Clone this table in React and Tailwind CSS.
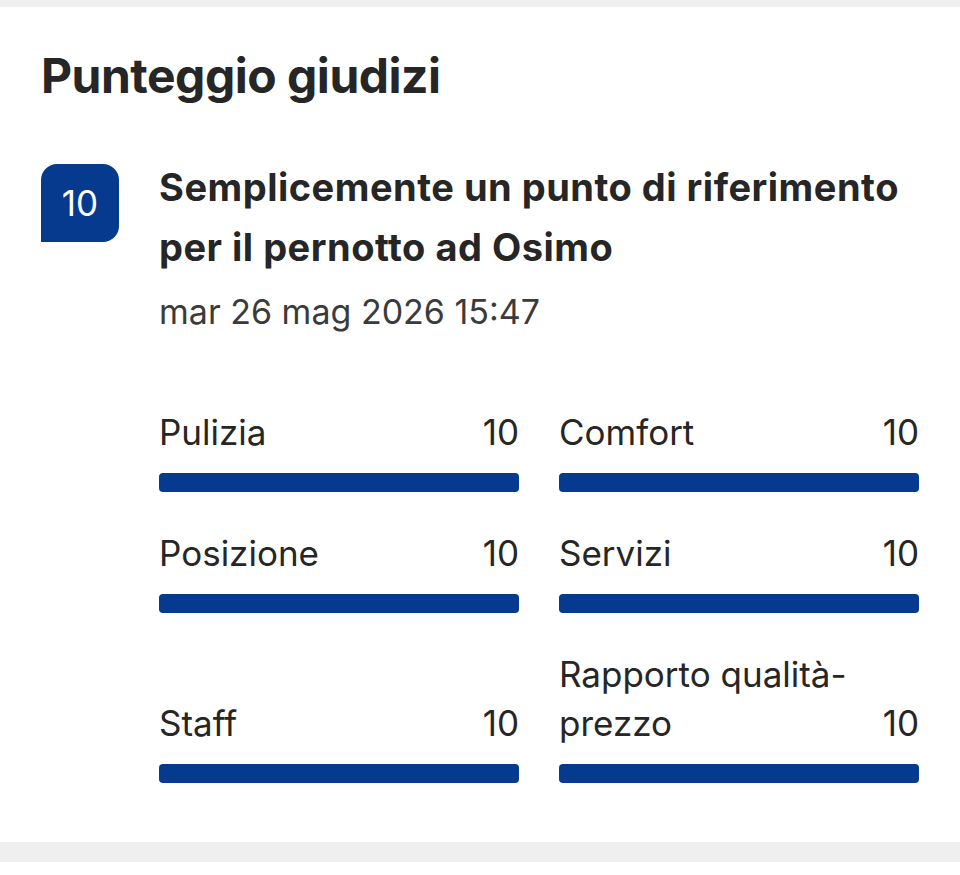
import React from "react";

const scores = [
  ["Pulizia", "10"],
  ["Comfort", "10"],
  ["Posizione", "10"],
  ["Servizi", "10"],
  ["Staff", "10"],
  ["Rapporto qualità-prezzo", "10"],
];

function Score({ label, value }) {
  return (
    <div className="flex flex-col justify-end">
      <div className="flex items-end justify-between gap-4 text-[35px] leading-[49px] text-[#262626]">
        <span className="max-w-[300px]">{label}</span>
        <span>{value}</span>
      </div>
      <div className="mt-[16px] h-[19px] w-full rounded-[4px] bg-[#063a8e]" />
    </div>
  );
}

export default function App() {
  return (
    <div
      className="flex h-[875px] w-[960px] flex-col bg-white"
      style={{ fontFamily: "Inter, 'Noto Sans', sans-serif" }}
    >
      <div className="h-[7px] bg-[#efefef]" />
      <div className="px-[41px] pt-[40px]">
        <h1 className="text-[48px] font-bold leading-[58px] tracking-[-0.5px] text-[#262626]">
          Punteggio giudizi
        </h1>
        <div className="mt-[52px] flex items-start gap-[40px]">
          <div className="mt-[7px] flex h-[78px] w-[78px] shrink-0 items-center justify-center rounded-t-[16px] rounded-br-[16px] bg-[#063a8e] text-[35px] text-white">
            10
          </div>
          <div className="flex-1">
            <div className="text-[38px] font-bold leading-[60px] tracking-[0.5px] text-[#262626]">
              Semplicemente un punto di riferimento per il pernotto ad Osimo
            </div>
            <div className="mt-[10px] text-[34px] leading-[50px] text-[#3b3b3b]">
              mar 26 mag 2026 15:47
            </div>
            <div className="mt-[71px] grid grid-cols-2 gap-x-[40px] gap-y-[37px]">
              {scores.map(([l, v]) => (
                <Score key={l} label={l} value={v} />
              ))}
            </div>
          </div>
        </div>
      </div>
      <div className="mt-auto mb-[13px] h-[20px] bg-[#efefef]" />
    </div>
  );
}
